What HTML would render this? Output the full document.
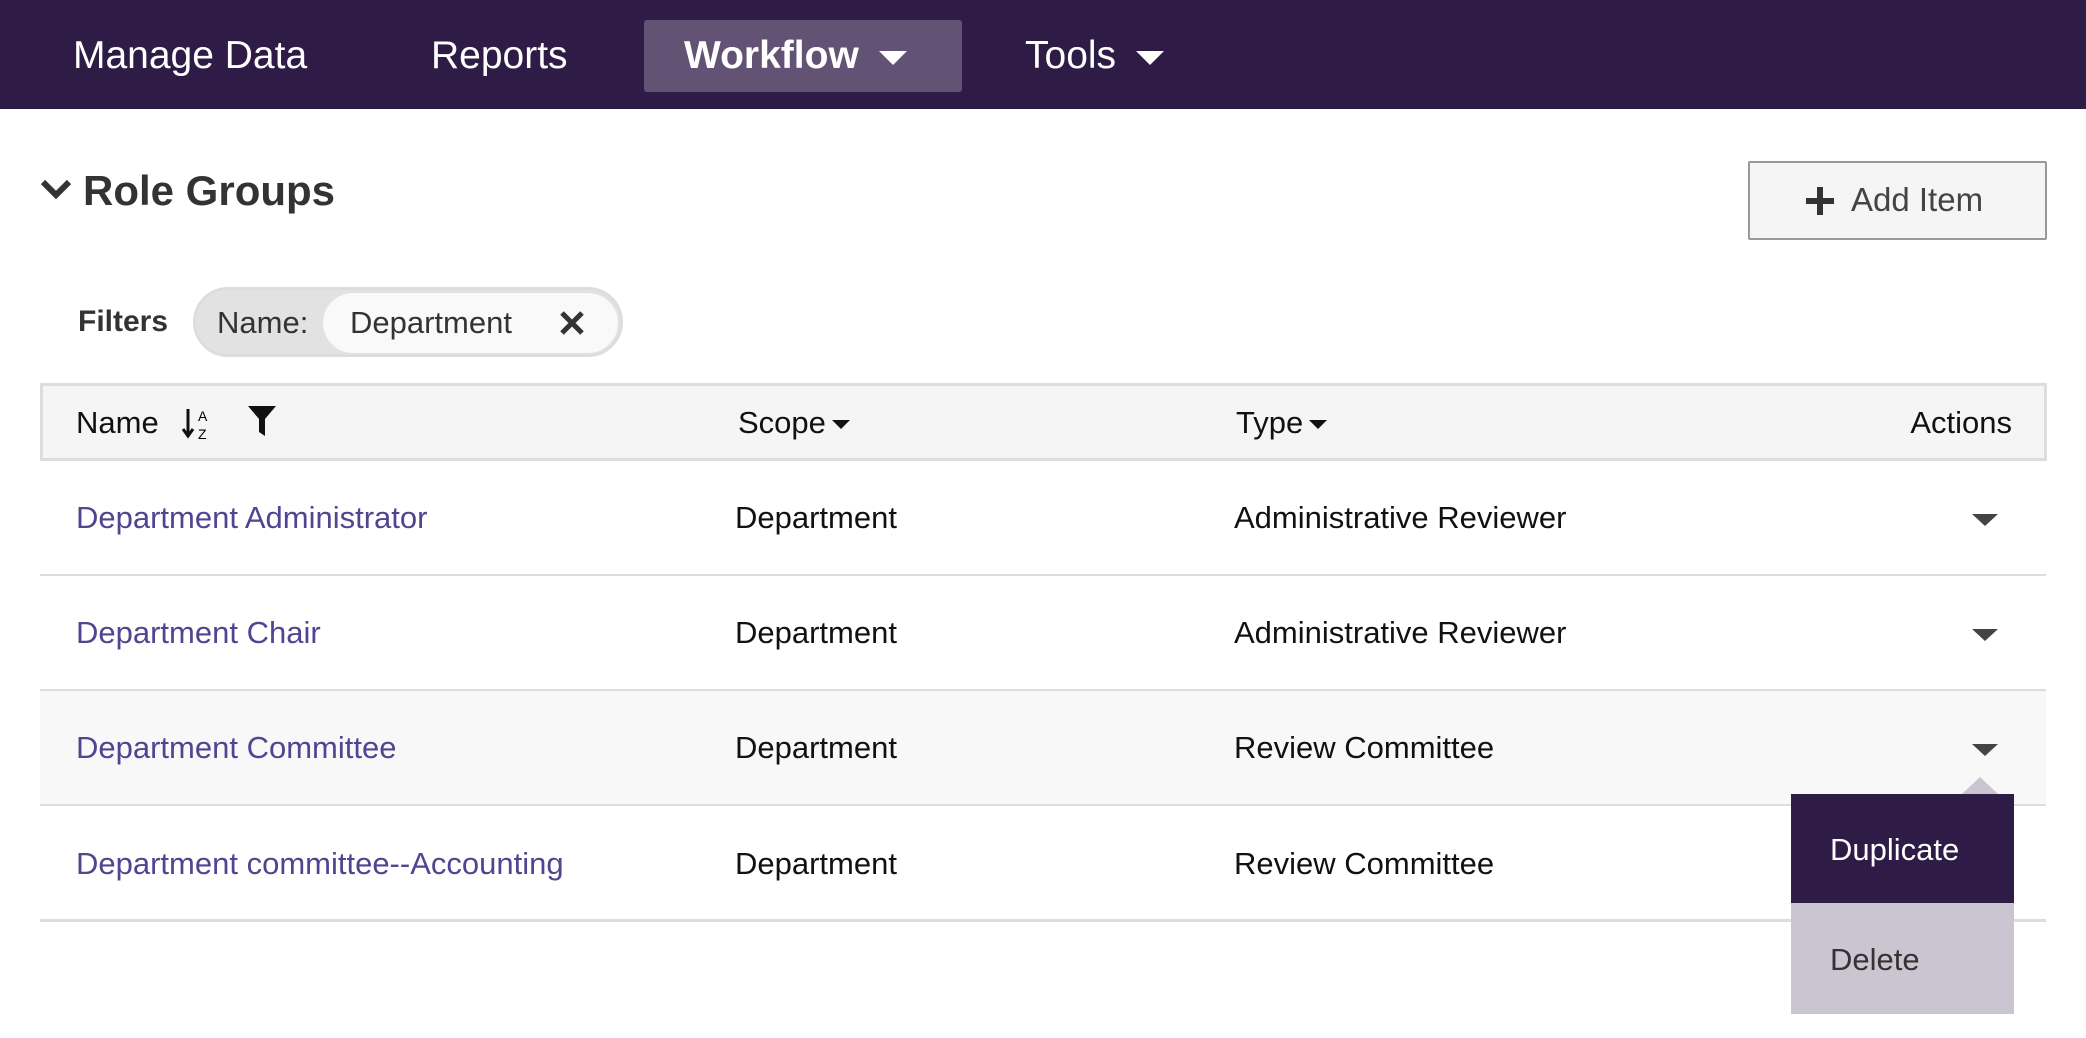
<!DOCTYPE html>
<html><head><meta charset="utf-8"><style>
*{margin:0;padding:0;box-sizing:border-box}
body{width:2086px;height:1038px;background:#fff;font-family:"Liberation Sans",sans-serif;position:relative;overflow:hidden;color:#111}
.a{position:absolute;white-space:nowrap}
.nav{position:absolute;left:0;top:0;width:2086px;height:109px;background:#2e1c47}
.nv{position:absolute;top:56px;transform:translateY(-50%);color:#fff;font-size:39px}
.tri{display:inline-block;width:0;height:0;border-left:14px solid transparent;border-right:14px solid transparent;border-top:14px solid #fff;vertical-align:middle;margin-left:20px}
.c{position:absolute;transform:translateY(-50%);font-size:31px;white-space:nowrap}
.lnk{color:#4f4590}
.row{position:absolute;left:40px;width:2006px;border-bottom:2px solid #ddd}
.car{position:absolute;left:1972px;width:0;height:0;border-left:13px solid transparent;border-right:13px solid transparent;border-top:12px solid #444}
.st{display:inline-block;width:0;height:0;border-left:9px solid transparent;border-right:9px solid transparent;border-top:9px solid #111;vertical-align:middle;margin-left:6px}
</style></head><body>
<div class="nav"></div>
<div class="a" style="left:644px;top:20px;width:318px;height:72px;background:#625273;border-radius:3px"></div>
<div class="nv" style="left:73px">Manage Data</div>
<div class="nv" style="left:431px">Reports</div>
<div class="nv" style="left:684px;font-weight:bold">Workflow<span class="tri"></span></div>
<div class="nv" style="left:1025px">Tools<span class="tri"></span></div>

<svg class="a" style="left:40px;top:178px" width="32" height="24" viewBox="0 0 32 24"><path d="M3 4 L16 17 L29 4" stroke="#333" stroke-width="6" fill="none"/></svg>
<div class="c" style="left:83px;top:191px;font-size:42px;font-weight:bold;color:#333">Role Groups</div>

<div class="a" style="left:1748px;top:161px;width:299px;height:79px;background:#f5f5f5;border:2px solid #999;border-radius:2px"></div>
<svg class="a" style="left:1804px;top:185px" width="32" height="32"><path d="M16 2V30M2 16H30" stroke="#333" stroke-width="6"/></svg>
<div class="c" style="left:1851px;top:200px;font-size:33px;color:#444">Add Item</div>

<div class="c" style="left:78px;top:322px;font-size:30px;font-weight:bold;color:#333">Filters</div>
<div class="a" style="left:193px;top:287px;width:430px;height:70px;background:#e2e2e2;border:3px solid #ddd;border-radius:35px"></div>
<div class="a" style="left:323px;top:293px;width:295px;height:60px;background:#f9f9f9;border-radius:30px"></div>
<div class="c" style="left:217px;top:323px;font-size:31px;color:#333">Name:</div>
<div class="c" style="left:350px;top:323px;font-size:31px;color:#333">Department</div>
<svg class="a" style="left:559px;top:310px" width="26" height="26"><path d="M3 3L23 23M23 3L3 23" stroke="#333" stroke-width="5"/></svg>

<div class="a" style="left:40px;top:383px;width:2007px;height:78px;background:#f5f5f5;border:3px solid #ddd"></div>
<div class="c" style="left:76px;top:423px">Name</div>
<svg class="a" style="left:181px;top:405px" width="36" height="36"><path d="M7 4V30M2 24L7 31L12 24" stroke="#111" stroke-width="3" fill="none"/><text x="17" y="16" font-size="14" font-family="Liberation Sans">A</text><text x="17" y="34" font-size="14" font-family="Liberation Sans">Z</text></svg>
<svg class="a" style="left:246px;top:404px" width="32" height="34"><path d="M2 2H30L19 15V32L13 28V15Z" fill="#111"/></svg>
<div class="c" style="left:738px;top:423px">Scope<span class="st"></span></div>
<div class="c" style="left:1236px;top:423px">Type<span class="st"></span></div>
<div class="c" style="right:74px;top:423px">Actions</div>

<div class="row" style="top:461px;height:115px"></div>
<div class="row" style="top:576px;height:115px"></div>
<div class="row" style="top:691px;height:115px;background:#f8f8f8"></div>
<div class="row" style="top:806px;height:116px;border-bottom:3px solid #ddd"></div>

<div class="c lnk" style="left:76px;top:518px">Department Administrator</div>
<div class="c" style="left:735px;top:518px">Department</div>
<div class="c" style="left:1234px;top:518px">Administrative Reviewer</div>
<div class="car" style="top:514px"></div>

<div class="c lnk" style="left:76px;top:633px">Department Chair</div>
<div class="c" style="left:735px;top:633px">Department</div>
<div class="c" style="left:1234px;top:633px">Administrative Reviewer</div>
<div class="car" style="top:629px"></div>

<div class="c lnk" style="left:76px;top:748px">Department Committee</div>
<div class="c" style="left:735px;top:748px">Department</div>
<div class="c" style="left:1234px;top:748px">Review Committee</div>
<div class="car" style="top:744px"></div>

<div class="c lnk" style="left:76px;top:864px">Department committee--Accounting</div>
<div class="c" style="left:735px;top:864px">Department</div>
<div class="c" style="left:1234px;top:864px">Review Committee</div>

<div class="a" style="left:1962px;top:777px;width:0;height:0;border-left:18px solid transparent;border-right:18px solid transparent;border-bottom:17px solid #cbc5d1"></div>
<div class="a" style="left:1791px;top:794px;width:223px;height:109px;background:#2e1c47"></div>
<div class="a" style="left:1791px;top:903px;width:223px;height:111px;background:#cbc5d1"></div>
<div class="c" style="left:1830px;top:850px;color:#fff">Duplicate</div>
<div class="c" style="left:1830px;top:960px;color:#333">Delete</div>
</body></html>
